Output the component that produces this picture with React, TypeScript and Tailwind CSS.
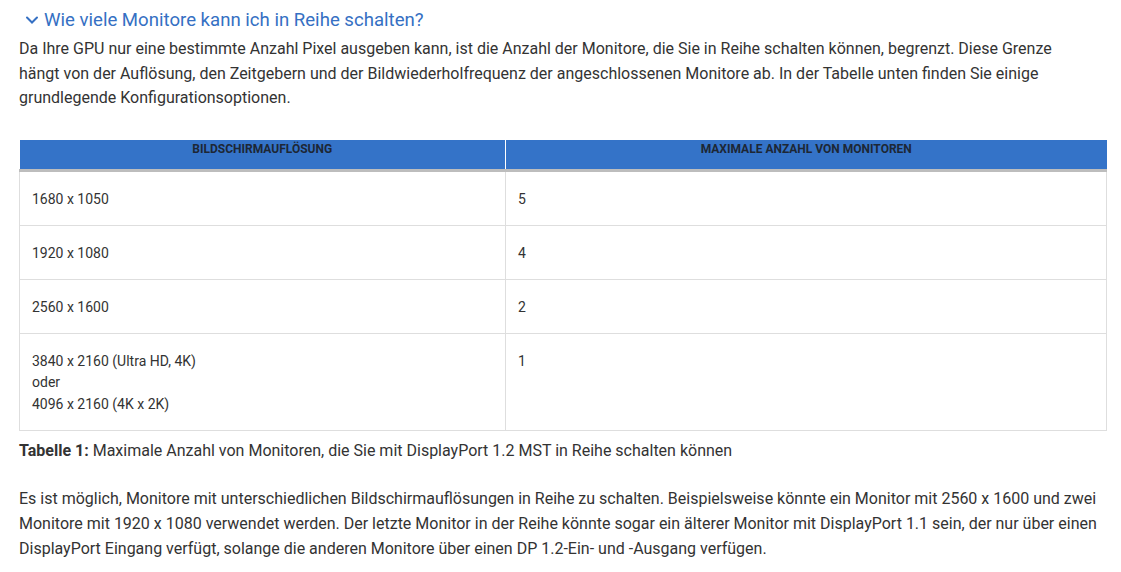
import React from "react";

const rows: { res: string[]; count: string }[] = [
  { res: ["1680 x 1050"], count: "5" },
  { res: ["1920 x 1080"], count: "4" },
  { res: ["2560 x 1600"], count: "2" },
  { res: ["3840 x 2160 (Ultra HD, 4K)", "oder", "4096 x 2160 (4K x 2K)"], count: "1" },
];

export default function App() {
  return (
    <div
      className="min-h-screen bg-white pl-[19px] pr-[14px] text-[#333]"
      style={{ fontFamily: "Roboto, 'Noto Sans', sans-serif" }}
    >
      {/* Question header */}
      <div className="flex items-center gap-[5px] pt-[8px] pl-[6px] text-[18.6px] leading-[24px] text-[#3570c3]">
        <svg width="14" height="14" viewBox="0 0 14 14" fill="none" stroke="currentColor" strokeWidth="2" strokeLinecap="round">
          <path d="M2 4.5 L7 9.5 L12 4.5" />
        </svg>
        <span>Wie viele Monitore kann ich in Reihe schalten?</span>
      </div>

      <p className="mt-[5px] w-[1070px] text-[16px] leading-[24.5px]">
        Da Ihre GPU nur eine bestimmte Anzahl Pixel ausgeben kann, ist die Anzahl der Monitore, die Sie in Reihe schalten können, begrenzt. Diese Grenze hängt von der Auflösung, den Zeitgebern und der Bildwiederholfrequenz der angeschlossenen Monitore ab. In der Tabelle unten finden Sie einige grundlegende Konfigurationsoptionen.
      </p>

      {/* Table */}
      <table className="mt-[29px] w-[1088px] border-collapse text-[14px] leading-[21.5px]">
        <thead>
          <tr className="bg-[#3473c8] border-b-[3px] border-[#bdbdbd]">
            <th className="h-[31px] w-[486px] border-r border-white align-top pt-[1px] text-[12px] leading-[17px] font-bold uppercase text-[#1d2735]">
              Bildschirmauflösung
            </th>
            <th className="h-[31px] align-top pt-[1px] text-[12px] leading-[17px] font-bold uppercase text-[#1d2735]">
              Maximale Anzahl von Monitoren
            </th>
          </tr>
        </thead>
        <tbody>
          {rows.map((r, i) => (
            <tr key={i}>
              <td className="border border-[#dedede] px-[12px] pt-[16.5px] pb-[15px] align-top">
                {r.res.map((l, j) => (
                  <div key={j}>{l}</div>
                ))}
              </td>
              <td className="border border-[#dedede] px-[12px] pt-[16.5px] pb-[15px] align-top">{r.count}</td>
            </tr>
          ))}
        </tbody>
      </table>

      <p className="mt-[8px] text-[16px] leading-[24.5px]">
        <span className="font-bold">Tabelle 1:</span> Maximale Anzahl von Monitoren, die Sie mit DisplayPort 1.2 MST in Reihe schalten können
      </p>

      <p className="mt-[22px] text-[16px] leading-[25px]">
        Es ist möglich, Monitore mit unterschiedlichen Bildschirmauflösungen in Reihe zu schalten. Beispielsweise könnte ein Monitor mit 2560 x 1600 und zwei Monitore mit 1920 x 1080 verwendet werden. Der letzte Monitor in der Reihe könnte sogar ein älterer Monitor mit DisplayPort 1.1 sein, der nur über einen DisplayPort Eingang verfügt, solange die anderen Monitore über einen DP 1.2-Ein- und -Ausgang verfügen.
      </p>
    </div>
  );
}
